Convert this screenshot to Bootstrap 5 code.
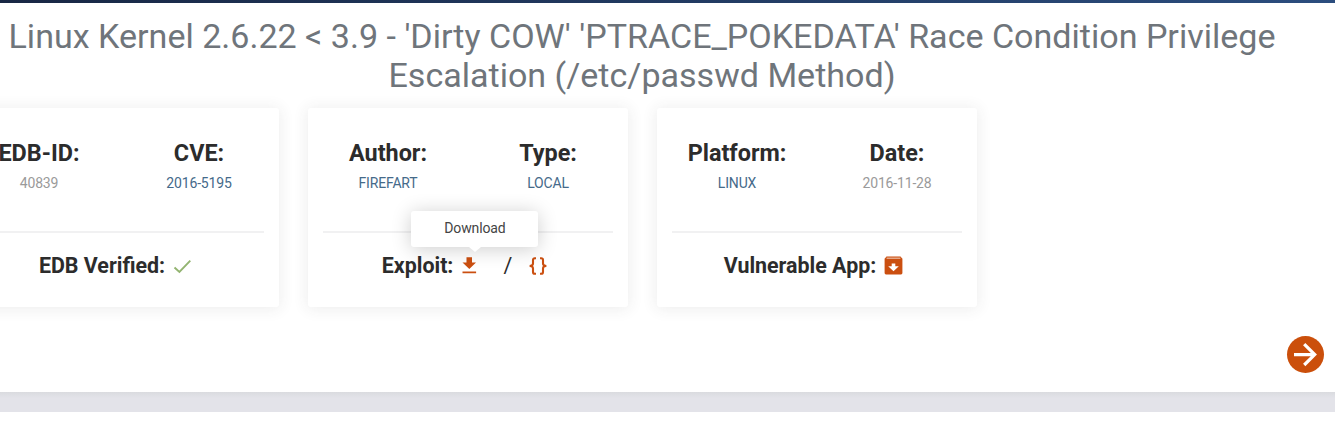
<!DOCTYPE html>
<html lang="en">
<head>
<meta charset="utf-8">
<meta name="viewport" content="width=device-width, initial-scale=1">
<title>Exploit 40839</title>
<link href="https://cdn.jsdelivr.net/npm/bootstrap@5.3.0/dist/css/bootstrap.min.css" rel="stylesheet">
<style>
body{font-family:Roboto,"Liberation Sans",sans-serif;background:#fff;height:421px;overflow:hidden}
.topline{height:3px;background:linear-gradient(90deg,#182744,#2b4d7e)}
.panel{height:389px;width:1366px;margin-left:-41px}
.headline{font-size:34.06px;line-height:39px;font-weight:400;color:#6f757b;margin:0;padding-top:14px;height:104.5px}
.stats-row{gap:29px}
.stats{width:320px;height:199.5px;border:0;border-radius:3px;box-shadow:0 1px 15px 1px rgba(60,60,60,.09);padding:0 15px}
.top-half{height:123px;padding-top:30px;margin:0 -15px}
.top-half h4{font-size:23.4px;line-height:30px;font-weight:700;color:#2c2c2c;margin:0 0 5px}
.top-half p{font-size:14px;line-height:21px;letter-spacing:-.17px;color:#9a9a9a;margin:0}
.top-half a{color:#456a8a;text-decoration:none}
.rule{height:2px;background:#f1f1f2}
.foot{height:67px;font-size:21.4px;font-weight:700;color:#2c2c2c;white-space:nowrap;padding-right:7px}
.foot svg,.next-btn svg{display:block}
.foot svg{flex:none;margin:0 0 1px 8px}
.orange{color:#cb4f10}
.tip{left:50%;bottom:30px;width:127px;height:36px;transform:translateX(calc(-50% + 8.5px));background:#fff;border-radius:3px;box-shadow:0 2px 20px rgba(0,0,0,.2);font-size:14px;font-weight:400;letter-spacing:-.15px;color:#444;z-index:3}
.tip::after{content:"";position:absolute;top:100%;left:calc(50% - 6px);border:6px solid transparent;border-top:5px solid #fff;border-bottom:0}
.slash{margin-left:24px}
.foot .braces{margin-left:17px}
.next-btn{width:37px;height:37px;background:#cb4f0b;margin:29px 0 0 auto;transform:translateX(-1px)}
.band{height:20px;background:linear-gradient(#dadbdf,#e3e3e9 6px)}
</style>
<script src="https://cdn.jsdelivr.net/npm/bootstrap@5.3.0/dist/js/bootstrap.bundle.min.js"></script>
</head>
<body>
<div class="topline"></div>
<main class="panel">
  <h1 class="headline text-center">Linux Kernel 2.6.22 &lt; 3.9 - 'Dirty COW' 'PTRACE_POKEDATA' Race Condition Privilege<br>Escalation (/etc/passwd Method)</h1>
  <div class="stats-row d-flex">
    <section class="card stats">
      <div class="top-half row g-0 text-center">
        <div class="col-6"><h4>EDB-ID:</h4><p>40839</p></div>
        <div class="col-6"><h4>CVE:</h4><p><a href="#">2016-5195</a></p></div>
      </div>
      <div class="rule"></div>
      <div class="foot d-flex align-items-center justify-content-center">
        <span>EDB Verified:</span>
        <svg width="19" height="20" viewBox="0 0 19 20"><path d="M1.500 11.500 6.400 16 17.300 4.700" fill="none" stroke="#93b471" stroke-width="1.900"/></svg>
      </div>
    </section>
    <section class="card stats">
      <div class="top-half row g-0 text-center">
        <div class="col-6"><h4>Author:</h4><p><a href="#">FIREFART</a></p></div>
        <div class="col-6"><h4>Type:</h4><p><a href="#">LOCAL</a></p></div>
      </div>
      <div class="rule"></div>
      <div class="foot d-flex align-items-center justify-content-center">
        <span>Exploit:</span>
        <span class="position-relative orange">
          <svg width="18" height="20" viewBox="0 0 18 20"><path d="M5.500 1.300h5.500v5.200H15L8.300 13 1.500 6.500h4zM1.500 15.400h13.600v1.900H1.500z" fill="currentColor"/></svg>
          <span class="tip position-absolute d-flex align-items-center justify-content-center">Download</span>
        </span>
        <span class="slash fw-normal">/</span>
        <svg class="orange braces" width="18" height="18" viewBox="0 0 18 18" fill="none" stroke="currentColor" stroke-width="2.100"><path d="M7 1.200H5.800Q4 1.200 4 3v3.600Q4 9 .6 9 4 9 4 11.400V15q0 1.800 1.800 1.800H7M11 1.200h1.200Q14 1.200 14 3v3.600Q14 9 17.400 9 14 9 14 11.400V15q0 1.800-1.800 1.800H11"/></svg>
      </div>
    </section>
    <section class="card stats">
      <div class="top-half row g-0 text-center">
        <div class="col-6"><h4>Platform:</h4><p><a href="#">LINUX</a></p></div>
        <div class="col-6"><h4>Date:</h4><p>2016-11-28</p></div>
      </div>
      <div class="rule"></div>
      <div class="foot d-flex align-items-center justify-content-center">
        <span>Vulnerable App:</span>
        <svg class="orange" width="19" height="19" viewBox="0 0 19 19"><path d="M2.500.5h14l1.900 2.200v14.400q0 1.400-1.400 1.400H2Q.6 18.500.6 17.100V2.700z" fill="currentColor"/><path d="M2.600 1.700h13.800v.9H2.600zM7.700 7.500h3.600v2.700h3.500l-5.300 5-5.300-5h3.500z" fill="#fff"/></svg>
      </div>
    </section>
  </div>
  <a href="#" class="next-btn rounded-circle d-flex align-items-center justify-content-center" aria-label="Next"><svg width="37" height="37" viewBox="0 0 37 37" fill="none" stroke="#fff" stroke-width="3.200"><path d="M7 18.600h21M17.200 8.200 27.700 18.600 17.200 29"/></svg></a>
</main>
<div class="band"></div>
</body>
</html>
